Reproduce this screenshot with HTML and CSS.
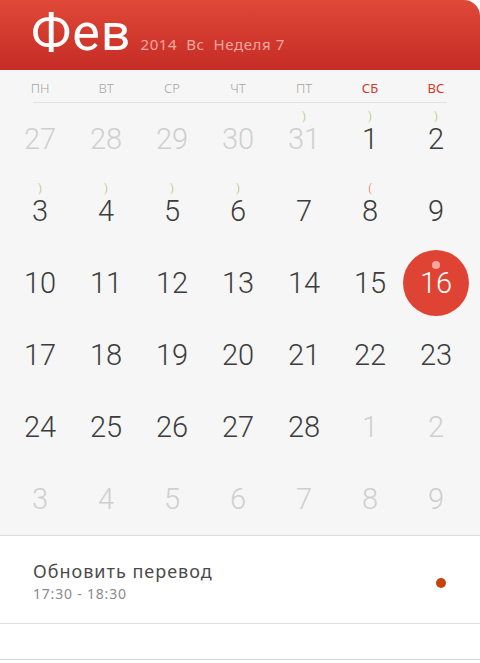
FILE: index.html
```html
<!DOCTYPE html>
<html lang="ru">
<head>
<meta charset="utf-8">
<link rel="stylesheet" href="styles.css">
</head>
<body>
<div class="app">
  <header class="header">
    <span class="month">Фев</span>
    <span class="sub">2014&nbsp; Вс&nbsp; Неделя 7</span>
  </header>
  <div class="weekdays">
    <span>ПН</span><span>ВТ</span><span>СР</span><span>ЧТ</span><span>ПТ</span><span class="we">СБ</span><span class="we">ВС</span>
  </div>
  <div class="grid">
    <div class="day out">27</div>
    <div class="day out">28</div>
    <div class="day out">29</div>
    <div class="day out">30</div>
    <div class="day out"><i class="moon">)</i>31</div>
    <div class="day"><i class="moon">)</i>1</div>
    <div class="day"><i class="moon">)</i>2</div>

    <div class="day"><i class="moon">)</i>3</div>
    <div class="day"><i class="moon">)</i>4</div>
    <div class="day"><i class="moon">)</i>5</div>
    <div class="day"><i class="moon">)</i>6</div>
    <div class="day">7</div>
    <div class="day"><i class="moon red">(</i>8</div>
    <div class="day">9</div>

    <div class="day">10</div>
    <div class="day">11</div>
    <div class="day">12</div>
    <div class="day">13</div>
    <div class="day">14</div>
    <div class="day">15</div>
    <div class="day today"><span class="circle"><b class="dot"></b>16</span></div>

    <div class="day">17</div>
    <div class="day">18</div>
    <div class="day">19</div>
    <div class="day">20</div>
    <div class="day">21</div>
    <div class="day">22</div>
    <div class="day">23</div>

    <div class="day">24</div>
    <div class="day">25</div>
    <div class="day">26</div>
    <div class="day">27</div>
    <div class="day">28</div>
    <div class="day out">1</div>
    <div class="day out">2</div>

    <div class="day out">3</div>
    <div class="day out">4</div>
    <div class="day out">5</div>
    <div class="day out">6</div>
    <div class="day out">7</div>
    <div class="day out">8</div>
    <div class="day out">9</div>
  </div>
  <div class="event">
    <div class="event-text">
      <div class="event-title">Обновить перевод</div>
      <div class="event-time">17:30 - 18:30</div>
    </div>
    <span class="event-dot"></span>
  </div>
  <div class="empty"></div>
</div>
</body>
</html>
```
FILE: styles.css
```css
html, body {
  margin: 0;
  padding: 0;
  background: #2b2b2b;
}
.app {
  width: 480px;
  height: 663px;
  background: #ffffff;
  overflow: hidden;
  font-family: "Noto Sans", "DejaVu Sans", sans-serif;
}
.header {
  height: 70px;
  box-sizing: border-box;
  background: linear-gradient(#e04838, #c52c25);
  border-top-right-radius: 16px;
  display: flex;
  align-items: baseline;
  padding: 2px 0 0 31px;
  gap: 9px;
}
.month {
  font-family: Roboto, sans-serif;
  font-size: 52px;
  line-height: normal;
  color: #ffffff;
  letter-spacing: 1px;
}
.sub {
  font-size: 15px;
  color: #f4a8a0;
  letter-spacing: 0.6px;
}
.weekdays {
  height: 33px;
  box-sizing: border-box;
  background: #f6f6f6;
  display: grid;
  grid-template-columns: repeat(7, 66px);
  padding: 0 11px 0 7px;
  align-items: center;
  position: relative;
}
.weekdays::after {
  content: "";
  position: absolute;
  left: 33px;
  right: 33px;
  bottom: 0;
  height: 1px;
  background: #e2e2e2;
}
.weekdays span {
  text-align: center;
  font-size: 13px;
  font-weight: 300;
  color: #a5a5a5;
  padding-top: 2px;
}
.weekdays .we {
  color: #d23a2c;
  font-weight: 400;
}
.grid {
  background: #f6f6f6;
  display: grid;
  grid-template-columns: repeat(7, 66px);
  grid-auto-rows: 72px;
  padding: 0 11px 0 7px;
  height: 433px;
  box-sizing: border-box;
  border-bottom: 1px solid #dcdcdc;
}
.day {
  position: relative;
  display: flex;
  align-items: center;
  justify-content: center;
  font-family: Roboto, sans-serif;
  font-weight: 300;
  font-size: 29px;
  line-height: 24px;
  color: #3c3c3c;
}
.day.out {
  color: #cfcfcf;
}
.moon {
  position: absolute;
  top: 9px;
  left: 0;
  right: 0;
  text-align: center;
  font-style: normal;
  font-size: 11px;
  color: #8cc63f;
  line-height: 10px;
}
.moon.red {
  color: #e8582e;
}
.circle {
  position: relative;
  width: 66px;
  height: 66px;
  border-radius: 50%;
  background: #df4333;
  color: #ffffff;
  display: flex;
  align-items: center;
  justify-content: center;
}
.dot {
  position: absolute;
  top: 11px;
  left: 29px;
  width: 8px;
  height: 8px;
  border-radius: 50%;
  background: #f6a8a0;
}
.event {
  height: 88px;
  box-sizing: border-box;
  border-bottom: 1px solid #dedede;
  display: flex;
  align-items: center;
  padding: 0 34px 0 33px;
  background: #ffffff;
}
.event-text {
  flex: 1;
  padding-top: 4px;
}
.event-title {
  font-size: 18px;
  color: #4a4a4a;
  line-height: 24px;
  letter-spacing: 1px;
}
.event-time {
  font-size: 14px;
  color: #8a8a8a;
  line-height: 22px;
  letter-spacing: 0.8px;
}
.event-dot {
  width: 10px;
  height: 10px;
  border-radius: 50%;
  background: #c8420c;
  margin-top: 6px;
}
.empty {
  height: 35px;
  border-bottom: 1px solid #d5d5d5;
  background: #ffffff;
}
```
